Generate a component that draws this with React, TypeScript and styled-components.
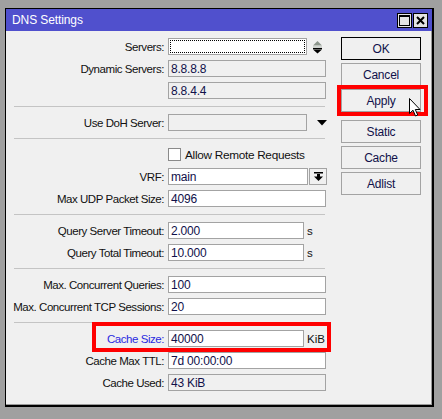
import React from 'react';
import styled, { createGlobalStyle } from 'styled-components';

const GlobalStyle = createGlobalStyle`
  html, body {
    margin: 0;
    padding: 0;
    background: #a0a0a0;
  }
  body {
    font-family: "Liberation Sans", Arial, sans-serif;
    font-size: 11px;
    color: #111;
  }
`;

const Window = styled.div`
  margin: 8px 0 0 5px;
  width: 429px;
  height: 399px;
  box-sizing: border-box;
  border-style: solid;
  border-color: #000;
  border-width: 1px 2px 2px 1px;
  background: #f0f0f0;
  box-shadow: inset -1px -1px 0 #9a9a9a;
  display: flex;
  flex-direction: column;
`;

const TitleBar = styled.div`
  height: 22px;
  flex: none;
  background: #5050cd;
  color: #fff;
  display: flex;
  align-items: center;
  padding: 0 4px 0 6px;
`;

const Title = styled.div`
  flex: 1;
  font-size: 12px;
  letter-spacing: -0.1px;
`;

const TitleButton = styled.div`
  width: 15px;
  height: 15px;
  box-sizing: border-box;
  border: 1px solid #000;
  background: #e4e4e4;
  margin-left: 1px;
  display: flex;
  align-items: center;
  justify-content: center;
`;

const Body = styled.div`
  flex: 1;
  display: flex;
  align-items: flex-start;
  padding-top: 7px;
`;

const FormCol = styled.div`
  width: 327px;
  display: flex;
  flex-direction: column;
`;

const Group = styled.div`
  display: flex;
  flex-direction: column;
  gap: 5px;
`;

const Separator = styled.div`
  height: 1px;
  background: #c4c4c4;
  margin: 7px 8px 7px 8px;
`;

const Row = styled.div`
  position: relative;
  display: flex;
  align-items: center;
  height: 17px;
`;

const Label = styled.div<{ $accent?: boolean }>`
  width: 158px;
  text-align: right;
  white-space: nowrap;
  font-size: 11.5px;
  letter-spacing: -0.45px;
  color: ${({ $accent }) => ($accent ? '#2a2ae0' : '#111')};
`;

const Field = styled.div<{ $w: number; $disabled?: boolean; $focus?: boolean }>`
  margin-left: 4px;
  width: ${({ $w }) => $w}px;
  height: 17px;
  box-sizing: border-box;
  border: 1px solid #a3a3a3;
  background: ${({ $disabled }) => ($disabled ? '#f0f0f0' : '#fff')};
  padding: ${({ $focus }) => ($focus ? '1px' : '0 0 0 2px')};
  display: flex;
  align-items: center;
  font-size: 12px;
  letter-spacing: -0.2px;
  color: #10104a;
  white-space: nowrap;
`;

const FocusRect = styled.div`
  width: 100%;
  height: 100%;
  box-sizing: border-box;
  border: 1px dotted #000;
`;

const Unit = styled.span`
  margin-left: 3px;
  font-size: 11.5px;
  color: #111;
`;

const DropButton = styled.div`
  margin-left: 1px;
  width: 18px;
  height: 17px;
  box-sizing: border-box;
  border: 1px solid #a3a3a3;
  background: #f0f0f0;
  display: flex;
  align-items: center;
  justify-content: center;
`;

const IconSlot = styled.div<{ $ml: number }>`
  margin-left: ${({ $ml }) => $ml}px;
  display: flex;
  align-items: center;
`;

const CheckRow = styled.div`
  display: flex;
  align-items: center;
  height: 17px;
  padding-left: 162px;
  gap: 4px;
  letter-spacing: -0.3px;
  font-size: 11.8px;
`;

const CheckBox = styled.div`
  width: 13px;
  height: 13px;
  box-sizing: border-box;
  border: 1px solid #8a8a8a;
  background: #fff;
`;

const Highlight = styled.div<{ $l: number; $t: number; $w: number; $h: number }>`
  position: absolute;
  left: ${({ $l }) => $l}px;
  top: ${({ $t }) => $t}px;
  width: ${({ $w }) => $w}px;
  height: ${({ $h }) => $h}px;
  box-sizing: border-box;
  border: 4px solid #ff0000;
  pointer-events: none;
`;

const ButtonCol = styled.div`
  margin: -1px 0 0 8px;
  width: 80px;
  display: flex;
  flex-direction: column;
  gap: 3px;
`;

const ButtonWrap = styled.div<{ $mt?: number }>`
  position: relative;
  margin-top: ${({ $mt }) => $mt || 0}px;
`;

const Button = styled.div<{ $default?: boolean }>`
  height: 23px;
  box-sizing: border-box;
  border: 1px solid ${({ $default }) => ($default ? '#000' : '#a3a3a3')};
  background: #f0f0f0;
  display: flex;
  align-items: center;
  justify-content: center;
  font-size: 12px;
  letter-spacing: -0.2px;
  color: #10104a;
`;

const Cursor = styled.svg`
  position: absolute;
  left: 68px;
  top: 9px;
`;

const UpDownIcon = () => (
  <svg width="11" height="14" viewBox="0 0 11 14">
    <path d="M5.5 1 L10 5.5 L1 5.5 Z" fill="#8c968c" />
    <rect x="1" y="6.5" width="9" height="1" fill="#b0b8b0" />
    <rect x="1" y="8" width="9" height="1.2" fill="#000" />
    <path d="M1 9.5 L10 9.5 L5.5 13.5 Z" fill="#000" />
  </svg>
);

const DownIcon = () => (
  <svg width="10" height="6" viewBox="0 0 10 6">
    <path d="M0 0 L10 0 L5 5.5 Z" fill="#000" />
  </svg>
);

const BarDownIcon = () => (
  <svg width="9" height="9" viewBox="0 0 9 9">
    <rect x="0" y="0" width="9" height="1.5" fill="#000" />
    <rect x="3" y="2" width="3" height="3" fill="#000" />
    <path d="M0 4.5 L9 4.5 L4.5 9 Z" fill="#000" />
  </svg>
);

const App: React.FC = () => {
  return (
    <>
      <GlobalStyle />
      <Window>
        <TitleBar>
          <Title>DNS Settings</Title>
          <TitleButton>
            <svg width="11" height="11" viewBox="0 0 11 11">
              <rect x="0.5" y="0.5" width="10" height="10" fill="none" stroke="#000" />
              <rect x="0" y="0" width="11" height="2" fill="#000" />
            </svg>
          </TitleButton>
          <TitleButton>
            <svg width="9" height="9" viewBox="0 0 9 9">
              <path d="M1 1 L8 8 M8 1 L1 8" stroke="#000" strokeWidth="2" />
            </svg>
          </TitleButton>
        </TitleBar>
        <Body>
          <FormCol>
            <Group>
              <Row>
                <Label>Servers:</Label>
                <Field $w={139} $focus>
                  <FocusRect />
                </Field>
                <IconSlot $ml={5}>
                  <UpDownIcon />
                </IconSlot>
              </Row>
              <Row>
                <Label>Dynamic Servers:</Label>
                <Field $w={158} $disabled>8.8.8.8</Field>
              </Row>
              <Row>
                <Label />
                <Field $w={158} $disabled>8.8.4.4</Field>
              </Row>
            </Group>
            <Separator />
            <Group>
              <Row>
                <Label>Use DoH Server:</Label>
                <Field $w={139} $disabled />
                <IconSlot $ml={10}>
                  <DownIcon />
                </IconSlot>
              </Row>
            </Group>
            <Separator />
            <Group>
              <CheckRow>
                <CheckBox />
                Allow Remote Requests
              </CheckRow>
              <Row>
                <Label>VRF:</Label>
                <Field $w={140}>main</Field>
                <DropButton>
                  <BarDownIcon />
                </DropButton>
              </Row>
              <Row>
                <Label>Max UDP Packet Size:</Label>
                <Field $w={158}>4096</Field>
              </Row>
            </Group>
            <Separator />
            <Group>
              <Row>
                <Label>Query Server Timeout:</Label>
                <Field $w={136}>2.000</Field>
                <Unit>s</Unit>
              </Row>
              <Row>
                <Label>Query Total Timeout:</Label>
                <Field $w={136}>10.000</Field>
                <Unit>s</Unit>
              </Row>
            </Group>
            <Separator />
            <Group>
              <Row>
                <Label>Max. Concurrent Queries:</Label>
                <Field $w={158}>100</Field>
              </Row>
              <Row>
                <Label>Max. Concurrent TCP Sessions:</Label>
                <Field $w={158}>20</Field>
              </Row>
            </Group>
            <Separator />
            <Group>
              <Row>
                <Label $accent>Cache Size:</Label>
                <Field $w={136}>40000</Field>
                <Unit>KiB</Unit>
                <Highlight $l={86} $t={-8} $w={239} $h={30} />
              </Row>
              <Row>
                <Label>Cache Max TTL:</Label>
                <Field $w={158}>7d 00:00:00</Field>
              </Row>
              <Row>
                <Label>Cache Used:</Label>
                <Field $w={158} $disabled>43 KiB</Field>
              </Row>
            </Group>
          </FormCol>
          <ButtonCol>
            <Button $default>OK</Button>
            <Button>Cancel</Button>
            <ButtonWrap>
              <Button>Apply</Button>
              <Highlight $l={-4} $t={-4} $w={91} $h={31} />
              <Cursor width="13" height="20" viewBox="0 0 13 20">
                <path
                  d="M0.5 0.5 L0.5 15.5 L4 12.2 L6.5 18 L8.7 17 L6.3 11.5 L11 11.5 Z"
                  fill="#fff"
                  stroke="#000"
                  strokeWidth="1"
                  strokeLinejoin="miter"
                />
              </Cursor>
            </ButtonWrap>
            <ButtonWrap $mt={5}>
              <Button>Static</Button>
            </ButtonWrap>
            <Button>Cache</Button>
            <Button>Adlist</Button>
          </ButtonCol>
        </Body>
      </Window>
    </>
  );
};

export default App;
